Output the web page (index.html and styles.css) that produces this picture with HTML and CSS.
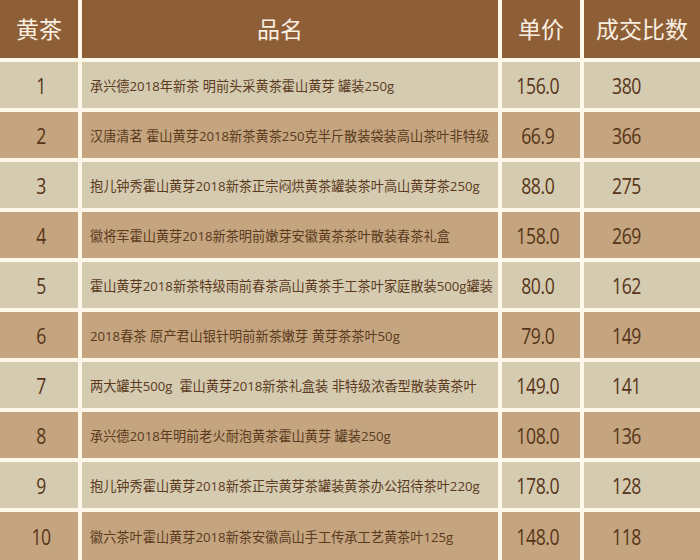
FILE: index.html
```html
<!DOCTYPE html>
<html lang="zh-CN">
<head>
<meta charset="utf-8">
<title>黄茶</title>
<link rel="stylesheet" href="styles.css">
</head>
<body>
<div class="table">
  <div class="row head">
    <div class="cell c1">黄茶</div>
    <div class="cell c2">品名</div>
    <div class="cell c3">单价</div>
    <div class="cell c4">成交比数</div>
  </div>
  <div class="row light">
    <div class="cell c1 num"><span>1</span></div>
    <div class="cell c2 name">承兴德2018年新茶 明前头采黄茶霍山黄芽 罐装250g</div>
    <div class="cell c3 num"><span>156.0</span></div>
    <div class="cell c4 num"><span>380</span></div>
  </div>
  <div class="row dark">
    <div class="cell c1 num"><span>2</span></div>
    <div class="cell c2 name">汉唐清茗 霍山黄芽2018新茶黄茶250克半斤散装袋装高山茶叶非特级</div>
    <div class="cell c3 num"><span>66.9</span></div>
    <div class="cell c4 num"><span>366</span></div>
  </div>
  <div class="row light">
    <div class="cell c1 num"><span>3</span></div>
    <div class="cell c2 name">抱儿钟秀霍山黄芽2018新茶正宗闷烘黄茶罐装茶叶高山黄芽茶250g</div>
    <div class="cell c3 num"><span>88.0</span></div>
    <div class="cell c4 num"><span>275</span></div>
  </div>
  <div class="row dark">
    <div class="cell c1 num"><span>4</span></div>
    <div class="cell c2 name">徽将军霍山黄芽2018新茶明前嫩芽安徽黄茶茶叶散装春茶礼盒</div>
    <div class="cell c3 num"><span>158.0</span></div>
    <div class="cell c4 num"><span>269</span></div>
  </div>
  <div class="row light">
    <div class="cell c1 num"><span>5</span></div>
    <div class="cell c2 name">霍山黄芽2018新茶特级雨前春茶高山黄茶手工茶叶家庭散装500g罐装</div>
    <div class="cell c3 num"><span>80.0</span></div>
    <div class="cell c4 num"><span>162</span></div>
  </div>
  <div class="row dark">
    <div class="cell c1 num"><span>6</span></div>
    <div class="cell c2 name">2018春茶 原产君山银针明前新茶嫩芽 黄芽茶茶叶50g</div>
    <div class="cell c3 num"><span>79.0</span></div>
    <div class="cell c4 num"><span>149</span></div>
  </div>
  <div class="row light">
    <div class="cell c1 num"><span>7</span></div>
    <div class="cell c2 name">两大罐共500g&nbsp; 霍山黄芽2018新茶礼盒装 非特级浓香型散装黄茶叶</div>
    <div class="cell c3 num"><span>149.0</span></div>
    <div class="cell c4 num"><span>141</span></div>
  </div>
  <div class="row dark">
    <div class="cell c1 num"><span>8</span></div>
    <div class="cell c2 name">承兴德2018年明前老火耐泡黄茶霍山黄芽 罐装250g</div>
    <div class="cell c3 num"><span>108.0</span></div>
    <div class="cell c4 num"><span>136</span></div>
  </div>
  <div class="row light">
    <div class="cell c1 num"><span>9</span></div>
    <div class="cell c2 name">抱儿钟秀霍山黄芽2018新茶正宗黄芽茶罐装黄茶办公招待茶叶220g</div>
    <div class="cell c3 num"><span>178.0</span></div>
    <div class="cell c4 num"><span>128</span></div>
  </div>
  <div class="row dark">
    <div class="cell c1 num"><span>10</span></div>
    <div class="cell c2 name">徽六茶叶霍山黄芽2018新茶安徽高山手工传承工艺黄茶叶125g</div>
    <div class="cell c3 num"><span>148.0</span></div>
    <div class="cell c4 num"><span>118</span></div>
  </div>
</div>
</body>
</html>
```
FILE: styles.css
```css
html, body {
  margin: 0;
  padding: 0;
}
body {
  width: 700px;
  height: 560px;
  overflow: hidden;
  background: #fdf8ea;
  font-family: "Open Sans", "Noto Sans CJK SC", sans-serif;
  color: #5b3a1d;
}
.table {
  display: flex;
  flex-direction: column;
  gap: 4px;
}
.row {
  display: grid;
  grid-template-columns: 78px 416px 78px 116px;
  column-gap: 4px;
  height: 46px;
}
.row:last-child {
  height: 48px;
}
.cell {
  display: flex;
  align-items: center;
  justify-content: center;
}
.head {
  height: 58px;
}
.head .cell {
  background: #8e5e37;
  color: #f8efe0;
  font-family: "Noto Sans CJK SC", sans-serif;
  font-size: 23px;
  font-weight: 400;
  padding-bottom: 2px;
}
.head .c2 {
  padding-right: 20px;
}
.light .cell {
  background: #d5cbb1;
}
.dark .cell {
  background: #c4a57f;
}
.name {
  justify-content: flex-start;
  padding-left: 8px;
  font-size: 13.2px;
  white-space: nowrap;
}
.num {
  font-family: "Open Sans", sans-serif;
  font-size: 22px;
  color: #573418;
}
.num span {
  display: inline-block;
  transform: scaleX(0.8);
  letter-spacing: -0.5px;
}
.row .c1.num {
  padding-left: 4px;
}
.row .c3.num {
  padding-right: 6px;
}
.row .c4.num {
  justify-content: flex-start;
  padding-left: 28px;
}
.row .c4.num span {
  transform-origin: left center;
}
```
